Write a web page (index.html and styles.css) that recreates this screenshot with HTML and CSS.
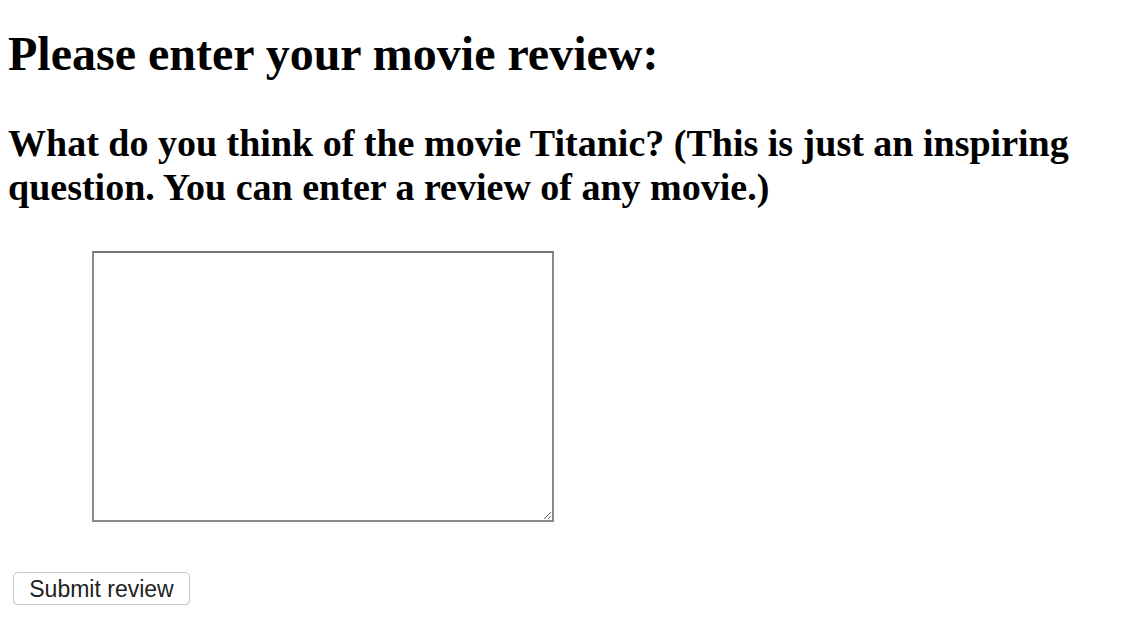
FILE: index.html
```html
<!DOCTYPE html>
<html>
<head>
<meta charset="utf-8">
<link rel="stylesheet" href="styles.css">
</head>
<body>
<h1 class="title">Please enter your movie review:</h1>
<h2 class="question">What do you think of the movie Titanic? (This is just an inspiring question. You can enter a review of any movie.)</h2>
<form class="review-form">
  <textarea class="review-box"></textarea>
  <button type="button" class="submit-btn">Submit review</button>
</form>
</body>
</html>
```
FILE: styles.css
```css
html, body {
  margin: 0;
  padding: 0;
  background: #fff;
}
body {
  padding: 0 8px;
  font-family: "Liberation Serif", "Times New Roman", serif;
  color: #000;
}
.title {
  font-size: 48px;
  font-weight: bold;
  line-height: 52px;
  margin: 28px 0 0 0;
}
.question {
  font-size: 38px;
  font-weight: bold;
  line-height: 44px;
  margin: 41px 0 0 0;
}
.review-form {
  display: flex;
  flex-direction: column;
  align-items: flex-start;
}
.review-box {
  box-sizing: border-box;
  width: 462px;
  height: 271px;
  margin: 42px 0 0 84px;
  border: 2px solid #8a8a8a;
  border-top-color: #767676;
  background: #fff;
  resize: both;
}
.submit-btn {
  box-sizing: border-box;
  margin: 50px 0 0 5px;
  width: 177px;
  height: 33px;
  font-family: "Liberation Sans", Arial, sans-serif;
  font-size: 23px;
  color: #222;
  background: #fff;
  border: 1px solid #c8c8c8;
  border-radius: 5px;
  box-shadow: 0 1px 1px rgba(0,0,0,0.12);
  padding: 2px 0 0 0;
}
```
